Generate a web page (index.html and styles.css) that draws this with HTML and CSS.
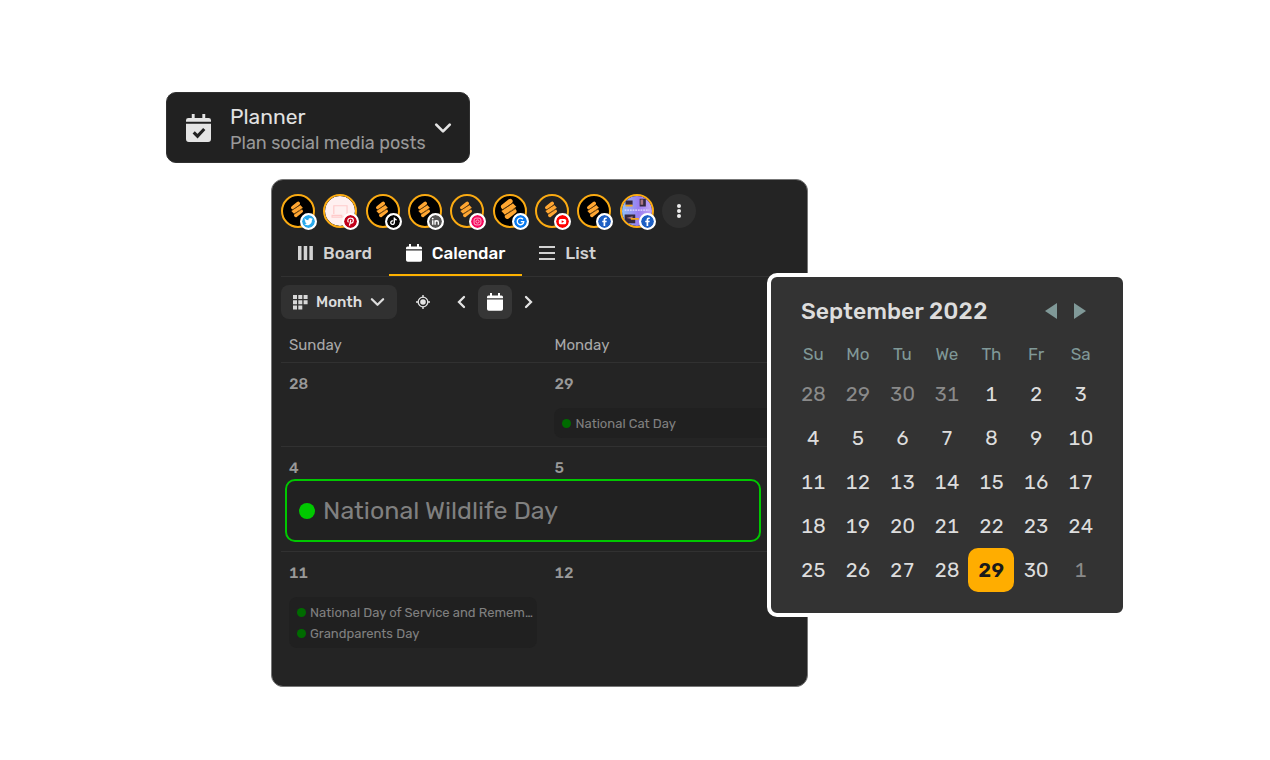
FILE: index.html
```html
<!DOCTYPE html>
<html lang="en">
<head>
<meta charset="utf-8">
<meta name="viewport" content="width=device-width, initial-scale=1">
<title>Planner</title>
<link rel="stylesheet" href="styles.css">
</head>
<body>
<svg class="defs" aria-hidden="true">
  <symbol id="cal" viewBox="0 0 16 18"><path d="M3 0h2v2.500h6V0h2v2.500h1.500Q16 2.500 16 4v1.300H0V4q0-1.500 1.500-1.500H3zM0 6.500h16V16q0 1.800-1.800 1.800H1.800Q0 17.800 0 16z" fill="currentColor"/></symbol>
  <symbol id="down" viewBox="0 0 16 10"><path d="M2 2l6 6 6-6" fill="none" stroke="currentColor" stroke-width="2.400" stroke-linecap="round" stroke-linejoin="round"/></symbol>
  <symbol id="mark" viewBox="0 0 34 34"><path d="M11.200 13.200l6-4.700M14.600 21.800l6-4.700" fill="none" stroke="#ffa632" stroke-linecap="round" stroke-width="4.200"/><path d="M9.500 17l10-6.800 3 3.200-10 6.800z" fill="#ffa632"/><path d="M9.800 16.200l9.500-6M12.800 20.500l9.500-6" fill="none" stroke="#4a2c05" stroke-width=".8"/></symbol>
  <symbol id="fb" viewBox="0 0 16 16"><circle cx="8" cy="8" r="8" fill="#1d5fc4"/><path d="M6.800 13.500V9H5.200V7h1.600V5.600q0-2.500 2.500-2.500h1.500V5H9.700q-.8 0-.8.8V7h1.900l-.3 2H8.900v4.500z" fill="#fff"/></symbol>
</svg>
<main class="stage">
  <button class="planner" type="button">
    <svg class="planner-icon" viewBox="0 0 26 29" aria-hidden="true"><path d="M6 0h3v4h8V0h3v4h3.500Q26 4 26 6.500V8H0V6.500Q0 4 2.500 4H6zM0 10h26v16q0 3-3 3H3q-3 0-3-3z" fill="#e4e4e4"/><path d="M8 19l4 4 7-7.500" fill="none" stroke="#222" stroke-width="3.200"/></svg>
    <span class="planner-text"><span class="planner-title">Planner</span><span class="planner-sub">Plan social media posts</span></span>
    <svg class="planner-arrow" aria-hidden="true"><use href="#down"/></svg>
  </button>

  <section class="board">
    <div class="accounts">
      <button class="account" type="button" aria-label="Twitter"><svg class="logo"><use href="#mark"/></svg><svg class="badge" viewBox="0 0 16 16"><circle cx="8" cy="8" r="8" fill="#29a9ec"/><path d="M3 4q2 2.500 4.800 2.500Q7.500 4 9.800 3.700q1 0 1.700.7l1.500-.5-.8 1.400 1.200-.3-1.200 1.200q.2 4.500-3.600 6-3 .9-5.800-.7 2 0 3.200-1-1.700-.3-2-1.700h1Q3.500 8.200 3.300 6.500l1 .3Q2.700 5.500 3 4z" fill="#fff"/></svg></button>
      <button class="account" type="button" aria-label="Pinterest"><svg class="logo" viewBox="0 0 34 34"><circle cx="17" cy="17" r="17" fill="#fff0f0"/><path d="M10 20.500V11h15v10.500M8 22h11v2H8zM20 24h6" fill="none" stroke="#ffcaca" stroke-width="1.300"/></svg><svg class="badge" viewBox="0 0 16 16"><circle cx="8" cy="8" r="8" fill="#c1001b"/><path d="M5.500 9Q4 7.500 5 5.500T8.500 3.800q3 .2 3 2.900T9 10q-1.300 0-1.600-.8M8.400 6L6.700 13" fill="none" stroke="#fff" stroke-width="1.500"/></svg></button>
      <button class="account" type="button" aria-label="TikTok"><svg class="logo"><use href="#mark"/></svg><svg class="badge" viewBox="0 0 16 16"><circle cx="8" cy="8" r="8" fill="#050505"/><path d="M7.500 7.300a2.200 2.200 0 1 0 1.500 2V3.200q.4 2.600 3 2.800" fill="none" stroke="#fff" stroke-width="1.700"/></svg></button>
      <button class="account" type="button" aria-label="LinkedIn"><svg class="logo"><use href="#mark"/></svg><svg class="badge" viewBox="0 0 16 16"><circle cx="8" cy="8" r="8" fill="#555"/><path d="M4.600 6.500V12M7.500 12V6.500M7.500 9q0-2 2-2t2 2v3" fill="none" stroke="#fff" stroke-width="1.700"/><circle cx="4.600" cy="4.400" r="1.100" fill="#fff"/></svg></button>
      <button class="account dark" type="button" aria-label="Instagram"><svg class="logo"><use href="#mark"/></svg><svg class="badge" viewBox="0 0 16 16"><circle cx="8" cy="8" r="8" fill="#f5085c"/><g fill="none" stroke="#ffb2cb" stroke-width="1.200"><rect x="3.800" y="3.800" width="8.400" height="8.400" rx="2.400"/><circle cx="8" cy="8" r="2"/></g></svg></button>
      <button class="account large" type="button" aria-label="Google"><svg class="logo"><use href="#mark"/></svg><svg class="badge" viewBox="0 0 16 16"><circle cx="8" cy="8" r="8" fill="#0879ef"/><path d="M11 5.300A4 4 0 1 0 12 8.200H8.400" fill="none" stroke="#fff" stroke-width="1.600"/></svg></button>
      <button class="account dark" type="button" aria-label="YouTube"><svg class="logo"><use href="#mark"/></svg><svg class="badge" viewBox="0 0 16 16"><circle cx="8" cy="8" r="8" fill="#f00"/><rect x="3.500" y="4.800" width="9" height="6.600" rx="2" fill="#fff"/><path d="M7 6.500l3 1.600-3 1.600z" fill="#f00"/></svg></button>
      <button class="account" type="button" aria-label="Facebook"><svg class="logo"><use href="#mark"/></svg><svg class="badge"><use href="#fb"/></svg></button>
      <button class="account" type="button" aria-label="Facebook page"><svg class="logo" viewBox="0 0 34 34"><defs><linearGradient id="sky"><stop offset="0" stop-color="#8fc0f5"/><stop offset=".55" stop-color="#9a7df0"/><stop offset="1" stop-color="#c4a8f4"/></linearGradient></defs><path d="M0 0h34v34H0z" fill="url(#sky)"/><path d="M4 5h8v5H4zM20 3h7v9h-7zM3 21h12v10H3z" fill="#34283e"/><path d="M21 4h3v6h-3zM5 25l7-2v3z" fill="#a87583"/><path d="M4 11h8M10 26h9" stroke="#f5a51d" stroke-width="2"/><path d="M3 16h28" stroke="#e4dcff" stroke-width="1.300" stroke-dasharray="2 1"/></svg><svg class="badge"><use href="#fb"/></svg></button>
      <button class="more" type="button" aria-label="More accounts"><svg viewBox="0 0 6 16" width="6" height="16"><g fill="#ededed"><circle cx="3" cy="3" r="2"/><circle cx="3" cy="8" r="2"/><circle cx="3" cy="13" r="2"/></g></svg></button>
    </div>

    <nav class="tabs">
      <button class="tab" type="button"><svg width="15" height="14" viewBox="0 0 15 14"><path d="M0 0h3.500v14H0zM5.700 0h3.500v14H5.700zM11.400 0h3.500v14h-3.500z" fill="currentColor"/></svg>Board</button>
      <button class="tab active" type="button"><svg width="16" height="18"><use href="#cal"/></svg>Calendar</button>
      <button class="tab" type="button"><svg width="16" height="14" viewBox="0 0 16 14"><path d="M0 1h16M0 7h16M0 13h16" stroke="currentColor" stroke-width="2"/></svg>List</button>
    </nav>

    <div class="toolbar">
      <button class="view" type="button"><svg width="15" height="15" viewBox="0 0 15 15"><path d="M0 0h4v4H0zM5.300 0h4v4h-4zM10.600 0h4v4h-4zM0 5.200h4v4H0zM5.300 5.200h4v4h-4zM10.600 5.200h4v4h-4zM0 10.400h4v4H0zM5.300 10.400h4v4h-4z" fill="#d8d8d8"/></svg>Month<svg class="view-arrow" width="15" height="10"><use href="#down"/></svg></button>
      <button class="tool" type="button" aria-label="Today"><svg width="14" height="14" viewBox="0 0 16 16"><circle cx="8" cy="8" r="5.500" fill="none" stroke="currentColor" stroke-width="1.500"/><circle cx="8" cy="8" r="3.200" fill="currentColor"/><path d="M8 0v3M8 13v3M0 8h3M13 8h3" stroke="currentColor" stroke-width="1.600"/></svg></button>
      <span class="pager">
        <button class="tool" type="button" aria-label="Previous"><svg width="10" height="14" viewBox="0 0 10 14"><path d="M8 2L3 7l5 5" fill="none" stroke="currentColor" stroke-width="2.300" stroke-linecap="round"/></svg></button>
        <button class="tool filled" type="button" aria-label="Pick date"><svg width="16" height="18"><use href="#cal"/></svg></button>
        <button class="tool" type="button" aria-label="Next"><svg width="10" height="14" viewBox="0 0 10 14"><path d="M2 2l5 5-5 5" fill="none" stroke="currentColor" stroke-width="2.300" stroke-linecap="round"/></svg></button>
      </span>
    </div>

    <div class="month">
      <div class="week names"><span>Sunday</span><span>Monday</span></div>
      <div class="week">
        <div class="day"><span class="num">28</span></div>
        <div class="day"><span class="num">29</span><ul class="events open"><li>National Cat Day</li></ul></div>
      </div>
      <div class="week tight">
        <span class="num">4</span><span class="num">5</span>
        <div class="callout">National Wildlife Day</div>
      </div>
      <div class="week last">
        <div class="day"><span class="num">11</span><ul class="events"><li>National Day of Service and Remem…</li><li>Grandparents Day</li></ul></div>
        <div class="day"><span class="num">12</span></div>
      </div>
    </div>
  </section>

  <aside class="picker">
    <header class="picker-head">
      <h2>September 2022</h2>
      <button class="step" type="button" aria-label="Previous month"><svg width="12" height="16" viewBox="0 0 12 16"><path d="M12 0v16L0 8z" fill="currentColor"/></svg></button>
      <button class="step" type="button" aria-label="Next month"><svg width="12" height="16" viewBox="0 0 12 16"><path d="M0 0v16l12-8z" fill="currentColor"/></svg></button>
    </header>
    <table class="dates">
      <thead><tr><th>Su</th><th>Mo</th><th>Tu</th><th>We</th><th>Th</th><th>Fr</th><th>Sa</th></tr></thead>
      <tbody>
        <tr><td class="out">28</td><td class="out">29</td><td class="out">30</td><td class="out">31</td><td>1</td><td>2</td><td>3</td></tr>
        <tr><td>4</td><td>5</td><td>6</td><td>7</td><td>8</td><td>9</td><td>10</td></tr>
        <tr><td>11</td><td>12</td><td>13</td><td>14</td><td>15</td><td>16</td><td>17</td></tr>
        <tr><td>18</td><td>19</td><td>20</td><td>21</td><td>22</td><td>23</td><td>24</td></tr>
        <tr><td>25</td><td>26</td><td>27</td><td>28</td><td><button class="picked" type="button">29</button></td><td>30</td><td class="out">1</td></tr>
      </tbody>
    </table>
  </aside>
</main>
</body>
</html>
```
FILE: styles.css
```css
* { box-sizing: border-box; }
body {
  margin: 0;
  padding: 92px 143px 32px 166px;
  background: #fff;
  font-family: Rubik, Inter, Roboto, sans-serif;
  font-variant-numeric: tabular-nums;
  color: #ddd;
}
button {
  border: 0;
  padding: 0;
  background: none;
  color: inherit;
  font: inherit;
  font-variant-numeric: tabular-nums;
  cursor: pointer;
}
svg { flex: none; display: block; }
.defs { position: absolute; width: 0; height: 0; }
.stage { position: relative; }

.planner {
  display: flex;
  align-items: center;
  width: 304px;
  height: 71px;
  padding: 0 17px 0 19px;
  border: 1px solid #303030;
  border-radius: 10px;
  background: #212121;
  text-align: left;
}
.planner-icon { width: 25px; height: 28px; }
.planner-text { display: flex; flex-direction: column; flex: 1; margin-left: 19px; padding-top: 5px; white-space: nowrap; }
.planner-title { font-size: 21px; line-height: 26px; color: #e2e2e2; }
.planner-sub { font-size: 18px; line-height: 26px; color: #999; }
.planner-arrow { width: 18px; height: 12px; color: #e4e4e4; }

.board {
  margin: 16px 319px 0 105px;
  padding: 14px 0 30px 9px;
  border: 1px solid #777;
  border-radius: 12px;
  background: #242424;
}
.accounts { display: flex; justify-content: space-between; width: 415px; }
.account {
  position: relative;
  width: 34px;
  height: 34px;
  border: 2px solid #fbab12;
  border-radius: 50%;
  background: #000;
}
.account.dark { background: #222; }
.logo { width: 30px; height: 30px; border-radius: 50%; }
.large .logo { transform: scale(1.3); }
.badge {
  position: absolute;
  right: -4px;
  bottom: -4px;
  width: 17px;
  height: 17px;
  border: 2px solid #fff;
  border-radius: 50%;
  background: #fff;
}
.more {
  display: grid;
  place-items: center;
  width: 34px;
  height: 34px;
  border-radius: 50%;
  background: #2f2f2f;
}

.tabs { display: flex; margin-top: 4px; border-bottom: 1px solid #313131; }
.tab {
  display: flex;
  align-items: center;
  gap: 10px;
  height: 44px;
  padding: 0 17px;
  border-bottom: 2px solid transparent;
  font-size: 17px;
  font-weight: 500;
  color: #d2d2d2;
}
.tab.active { border-color: #fcb100; color: #fff; }

.toolbar { display: flex; align-items: center; gap: 9px; margin-top: 8px; }
.view {
  display: flex;
  align-items: center;
  gap: 8px;
  height: 34px;
  padding: 0 12px;
  border-radius: 8px;
  background: #313131;
  font-size: 15px;
  font-weight: 500;
}
.tool { display: grid; place-items: center; width: 34px; height: 34px; border-radius: 8px; color: #e4e4e4; }
.tool.filled { background: #363636; color: #fff; }
.pager { display: flex; margin-left: -5px; }

.week {
  display: grid;
  grid-template-columns: minmax(0, 266fr) minmax(0, 261fr);
  min-height: 84px;
  padding-top: 11px;
  border-bottom: 1px solid #313131;
}
.week > span, .day { padding-left: 8px; }
.names { min-height: 44px; padding-top: 16px; font-size: 15px; line-height: 21px; color: #a9a9a9; }
.num { font-size: 15px; line-height: 21px; font-weight: 500; color: #999; }
.day { display: flex; flex-direction: column; }
.tight { min-height: 105px; padding-bottom: 9px; }
.last { border: 0; }
.events {
  margin: 13px 9px 8px 0;
  padding: 5px 8px 4px;
  border-radius: 8px;
  background: #202020;
  list-style: none;
  font-size: 13px;
  line-height: 21px;
  color: #808080;
}
.events.open { margin-right: 0; border-radius: 8px 0 0 8px; }
.events li { display: flex; align-items: center; gap: 4px; white-space: nowrap; }
.events li::before { content: ""; flex: none; width: 9px; height: 9px; border-radius: 50%; background: #006b00; }
.callout {
  grid-column: 1 / -1;
  display: flex;
  align-items: center;
  gap: 8px;
  height: 63px;
  margin: 0 46px 0 4px;
  padding-left: 12px;
  border: 2px solid #00c800;
  border-radius: 10px;
  background: #212121;
  font-size: 25px;
  color: #808080;
}
.callout::before { content: ""; width: 16px; height: 16px; border-radius: 50%; background: #00c800; }

.picker {
  position: absolute;
  top: 181px;
  right: 0;
  width: 360px;
  padding: 17px 20px 21px;
  border: 4px solid #fff;
  border-radius: 10px;
  background: #333;
}
.picker-head { display: flex; align-items: center; gap: 17px; padding: 0 17px 0 10px; }
.picker-head h2 { flex: 1; margin: 0; font-size: 23px; line-height: 34px; font-weight: 500; white-space: nowrap; }
.step { color: #809998; }
.dates { width: 100%; border-collapse: collapse; table-layout: fixed; text-align: center; font-size: 20px; color: #ddd; }
.dates th, .dates td { padding: 0; }
.dates th { height: 44px; padding-top: 8px; font-size: 17px; font-weight: 400; color: #809998; }
.dates tbody tr { height: 44px; }
.dates .out { color: #8a8a8a; }
.picked {
  display: block;
  width: 46px;
  height: 44px;
  margin-left: -1px;
  border-radius: 10px;
  background: #ffad00;
  font-weight: 600;
  color: #1a1a1a;
}
```
